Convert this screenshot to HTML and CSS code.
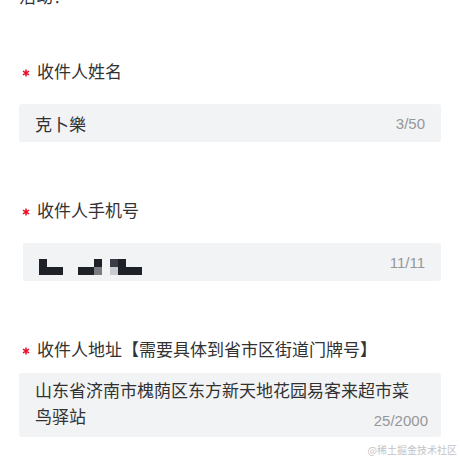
FILE: index.html
```html
<!DOCTYPE html>
<html lang="zh-CN">
<head>
    <meta charset="UTF-8">
    <meta name="viewport" content="width=device-width, initial-scale=1.0">
    <title>收件信息</title>
    <link rel="stylesheet" href="styles.css">
</head>
<body>

    <div class="form-page">
        <p class="intro">活动！</p>

        <!-- 收件人姓名 -->
        <div class="form-item">
            <div class="form-label">
                <svg class="required" width="8" height="8" viewBox="0 0 8 8"><path d="M4 0.5V7.5M1 2.2L7 5.8M7 2.2L1 5.8"/></svg>
                收件人姓名
            </div>
            <div class="field-box">
                <span class="field-value">克卜樂</span>
                <span class="word-limit">3/50</span>
            </div>
        </div>

        <!-- 收件人手机号 (打码) -->
        <div class="form-item">
            <div class="form-label">
                <svg class="required" width="8" height="8" viewBox="0 0 8 8"><path d="M4 0.5V7.5M1 2.2L7 5.8M7 2.2L1 5.8"/></svg>
                收件人手机号
            </div>
            <div class="field-box masked">
                <svg class="mosaic" width="104" height="16" viewBox="0 0 104 16">
                    <rect x="0" y="0" width="8" height="16" fill="#1f2128"/>
                    <rect x="0" y="8" width="24" height="8" fill="#1f2128"/>
                    <rect x="39" y="8" width="16" height="8" fill="#1f2128"/>
                    <rect x="55" y="0" width="8" height="8" fill="#1f2128"/>
                    <rect x="55" y="8" width="8" height="8" fill="#7a7b80"/>
                    <rect x="71" y="0" width="8" height="8" fill="#3b3c45"/>
                    <rect x="71" y="8" width="8" height="8" fill="#c9cacf"/>
                    <rect x="79" y="0" width="8" height="16" fill="#1f2128"/>
                    <rect x="79" y="8" width="24" height="8" fill="#1f2128"/>
                </svg>
                <span class="word-limit">11/11</span>
            </div>
        </div>

        <!-- 收件人地址 -->
        <div class="form-item">
            <div class="form-label label-tight">
                <svg class="required" width="8" height="8" viewBox="0 0 8 8"><path d="M4 0.5V7.5M1 2.2L7 5.8M7 2.2L1 5.8"/></svg>
                收件人地址【需要具体到省市区街道门牌号】
            </div>
            <div class="field-box textarea">
                <div class="field-value">山东省济南市槐荫区东方新天地花园易客来超市菜</div>
                <div class="last-line">
                    <span class="field-value">鸟驿站</span>
                    <span class="word-limit">25/2000</span>
                </div>
            </div>
        </div>
    </div>

    <div class="watermark">@稀土掘金技术社区</div>

</body>
</html>
```

FILE: styles.css
```css
/* 收件信息表单 */
html, body {
    margin: 0;
    height: 100%;
    overflow: hidden;
    background-color: #fff;
}

body {
    font-family: "Liberation Sans", "Noto Sans CJK SC", sans-serif;
    color: #323233;
    position: relative;
}

.form-page {
    padding: 0 19px;
}

.intro {
    margin: -15px 0 0;
    font-size: 17px;
    line-height: 26px;
}

.form-item {
    margin-top: 50px;
}

.form-item + .form-item {
    margin-top: 58px;
}

.form-label {
    display: flex;
    align-items: center;
    padding-left: 3px;
    font-size: 17px;
    line-height: 24px;
    margin-bottom: 19px;
}

.form-label.label-tight {
    margin-bottom: 10px;
}

/* 红色必填星号 */
.required {
    flex: none;
    margin-right: 7px;
    stroke: #ee0a24;
    stroke-width: 1.5;
    fill: none;
}

.field-box {
    display: flex;
    align-items: center;
    justify-content: space-between;
    height: 38px;
    padding: 0 16px;
    background-color: #f2f3f5; /* 浅灰输入框 */
    border-radius: 3px;
    position: relative;
}

.field-value {
    font-size: 17px;
}

.word-limit {
    font-size: 15px;
    color: #969799;
}

/* 手机号打码区域 */
.mosaic {
    display: block;
    margin-top: 10px;
    margin-left: 4px;
}

.field-box.masked::before {
    content: '';
    position: absolute;
    left: 0;
    top: 0;
    bottom: -2px;
    width: 4px;
    background-color: #fff;
}

/* 多行地址 */
.field-box.textarea {
    display: block;
    height: auto;
    padding: 6px 13px 6px 16px;
}

.field-box.textarea .field-value {
    line-height: 26px;
}

.last-line {
    display: flex;
    justify-content: space-between;
    align-items: center;
}

.last-line .word-limit {
    line-height: 20px;
    margin-top: 5px;
}

.watermark {
    position: absolute;
    right: 3px;
    bottom: 3px;
    font-family: "Noto Sans CJK SC", sans-serif;
    font-size: 10px;
    color: #c4c4c6;
}
```
